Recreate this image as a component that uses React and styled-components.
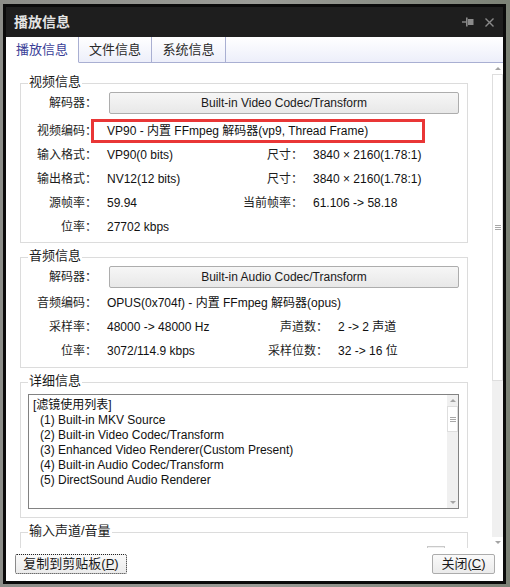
import React from 'react';
import styled, { createGlobalStyle } from 'styled-components';

const FONT = '"Liberation Sans", "Noto Sans CJK SC", sans-serif';

const videoRows = [
  { label: '视频编码：', value: 'VP90 - 内置 FFmpeg 解码器(vp9, Thread Frame)', marked: true },
  { label: '输入格式：', value: 'VP90(0 bits)', label2: '尺寸：', value2: '3840 × 2160(1.78:1)' },
  { label: '输出格式：', value: 'NV12(12 bits)', label2: '尺寸：', value2: '3840 × 2160(1.78:1)' },
  { label: '源帧率：', value: '59.94', label2: '当前帧率：', value2: '61.106 -> 58.18' },
  { label: '位率：', value: '27702 kbps' },
];

const audioRows = [
  { label: '音频编码：', value: 'OPUS(0x704f) - 内置 FFmpeg 解码器(opus)' },
  { label: '采样率：', value: '48000 -> 48000 Hz', label2: '声道数：', value2: '2 -> 2 声道' },
  { label: '位率：', value: '3072/114.9 kbps', label2: '采样位数：', value2: '32 -> 16 位' },
];

const filters = [
  '(1) Built-in MKV Source',
  '(2) Built-in Video Codec/Transform',
  '(3) Enhanced Video Renderer(Custom Present)',
  '(4) Built-in Audio Codec/Transform',
  '(5) DirectSound Audio Renderer',
];

const InfoRows = ({ rows, cols, top }) => (
  <Rows $top={top}>
    {rows.map((r, i) => (
      <InfoRow key={i} $cols={cols}>
        <Label>{r.label}</Label>
        <Value $wide={!r.label2}>{r.value}</Value>
        {r.label2 && <Label>{r.label2}</Label>}
        {r.label2 && <Value>{r.value2}</Value>}
        {r.marked && <RedMark />}
      </InfoRow>
    ))}
  </Rows>
);

const ScrollBar = ({ thumb, small }) => (
  <Bar $small={small}>
    <ArrowCell>
      <Arrow />
    </ArrowCell>
    <Thumb $h={thumb}>
      <Grip />
    </Thumb>
    <Track />
    <ArrowCell>
      <Arrow $down />
    </ArrowCell>
  </Bar>
);

const App = () => {
  return (
    <>
      <GlobalStyle />
      <Window>
        <TitleBar>
          <TitleText>播放信息</TitleText>
          <TitleIcons>
            <svg width="12" height="10" viewBox="0 0 12 10">
              <path d="M0 5h5" stroke="#8a8a8a" strokeWidth="1.4" />
              <rect x="4" y="0.5" width="1.6" height="9" fill="#8a8a8a" />
              <rect x="6" y="2" width="5.5" height="6" fill="#8a8a8a" />
            </svg>
            <svg width="9" height="9" viewBox="0 0 9 9">
              <path d="M0.5 0.5l8 8M8.5 0.5l-8 8" stroke="#8a8a8a" strokeWidth="1.4" />
            </svg>
          </TitleIcons>
        </TitleBar>

        <TabStrip>
          <Tab $w={73} $active>播放信息</Tab>
          <Tab $w={73}>文件信息</Tab>
          <Tab $w={74}>系统信息</Tab>
          <TabFill />
        </TabStrip>

        <Body>
          <Scroll>
            <Group $pad="8px 8px 3px 0">
              <Legend>视频信息</Legend>
              <DecoderRow>
                <Label $w={76}>解码器：</Label>
                <CodecButton>Built-in Video Codec/Transform</CodecButton>
              </DecoderRow>
              <InfoRows rows={videoRows} cols="76px 146px 60px 1fr" top={5} />
            </Group>

            <Group $pad="8px 8px 4px 0">
              <Legend>音频信息</Legend>
              <DecoderRow>
                <Label $w={76}>解码器：</Label>
                <CodecButton>Built-in Audio Codec/Transform</CodecButton>
              </DecoderRow>
              <InfoRows rows={audioRows} cols="76px 171px 60px 1fr" top={3} />
            </Group>

            <Group $pad="11px 8px 8px 7px">
              <Legend>详细信息</Legend>
              <ListBox>
                <ListText>
                  <ListLine>[滤镜使用列表]</ListLine>
                  {filters.map((f) => (
                    <ListLine key={f} $indent>
                      {f}
                    </ListLine>
                  ))}
                </ListText>
                <ScrollBar thumb={26} small />
              </ListBox>
            </Group>

            <Group $pad="13px 22px 0 0" $h={60}>
              <Legend>输入声道/音量</Legend>
              <SliderThumb />
            </Group>
          </Scroll>
          <ScrollBar thumb={307} />
        </Body>

        <Footer>
          <FooterButton $w={112} $focused>
            复制到剪贴板(<u>P</u>)
          </FooterButton>
          <FooterButton $w={63}>
            关闭(<u>C</u>)
          </FooterButton>
        </Footer>
      </Window>
    </>
  );
};

export default App;

const GlobalStyle = createGlobalStyle`
  html, body {
    margin: 0;
    padding: 0;
  }
  body {
    width: 510px;
    height: 587px;
    overflow: hidden;
    background: linear-gradient(90deg, #8c8d88, #9b9c97 50%, #7c8276);
    font-family: ${FONT};
  }
`;

const Window = styled.div`
  box-sizing: border-box;
  margin: 4px 0 0 3px;
  width: 503px;
  height: 580px;
  border: 3px solid #0b0b0b;
  background: #fff;
  display: flex;
  flex-direction: column;
  overflow: hidden;
`;

const TitleBar = styled.div`
  flex-shrink: 0;
  height: 30px;
  box-sizing: border-box;
  display: flex;
  align-items: center;
  padding: 0 9px 0 8px;
  background: #1e1e1e;
  color: #e4e4e4;
  font-size: 14px;
  font-weight: bold;
`;

const TitleText = styled.div`
  flex: 1;
  line-height: 18px;
`;

const TitleIcons = styled.div`
  display: flex;
  align-items: center;
  gap: 11px;
`;

const TabStrip = styled.div`
  flex-shrink: 0;
  display: flex;
  height: 26px;
  background: linear-gradient(#ffffff, #eceefa);
`;

const Tab = styled.div`
  box-sizing: border-box;
  width: ${(p) => p.$w}px;
  display: flex;
  align-items: center;
  justify-content: center;
  font-size: 13px;
  line-height: 16px;
  padding-top: 1px;
  border-right: 1px solid #a9afd2;
  border-bottom: 1px solid ${(p) => (p.$active ? 'transparent' : '#a9afd2')};
  background: ${(p) => (p.$active ? '#fff' : 'transparent')};
  color: ${(p) => (p.$active ? '#3b3f98' : '#2a2a2a')};
`;

const TabFill = styled.div`
  flex: 1;
  border-bottom: 1px solid #a9afd2;
`;

const Body = styled.div`
  flex-shrink: 0;
  display: flex;
  height: 485px;
`;

const Scroll = styled.div`
  flex: 1;
  overflow: hidden;
  display: flex;
  flex-direction: column;
  gap: 14px;
  padding: 20px 0 0 14px;
`;

const Group = styled.div`
  position: relative;
  flex-shrink: 0;
  box-sizing: border-box;
  width: 448px;
  ${(p) => p.$h && `height: ${p.$h}px;`}
  border: 1px solid #dcdcdc;
  padding: ${(p) => p.$pad};
`;

const Legend = styled.span`
  position: absolute;
  top: -10px;
  left: 7px;
  padding: 0 1px;
  background: #fff;
  font-size: 13px;
  line-height: 16px;
  color: #1b1b1b;
`;

const DecoderRow = styled.div`
  display: flex;
  align-items: center;
  height: 22px;
`;

const Label = styled.div`
  ${(p) => p.$w && `width: ${p.$w}px; flex-shrink: 0;`}
  text-align: right;
  white-space: nowrap;
  font-size: 12px;
  line-height: 16px;
  color: #1e1e1e;
`;

const CodecButton = styled.div`
  flex: 1;
  height: 22px;
  box-sizing: border-box;
  margin-left: 12px;
  display: flex;
  align-items: center;
  justify-content: center;
  border: 1px solid #adadad;
  border-radius: 2px;
  background: linear-gradient(#f6f6f6, #e8e8e8);
  font-size: 12px;
  line-height: 16px;
  color: #1a1a1a;
`;

const Rows = styled.div`
  margin-top: ${(p) => p.$top}px;
`;

const InfoRow = styled.div`
  position: relative;
  display: grid;
  grid-template-columns: ${(p) => p.$cols};
  align-items: center;
  height: 24px;
`;

const Value = styled.div`
  padding-left: 10px;
  white-space: nowrap;
  font-size: 12px;
  line-height: 16px;
  color: #111;
  ${(p) => p.$wide && 'grid-column: 2 / 5;'}
`;

const RedMark = styled.div`
  position: absolute;
  left: 70px;
  top: 0;
  width: 334px;
  height: 24px;
  box-sizing: border-box;
  border: 3px solid #e93636;
`;

const ListBox = styled.div`
  display: flex;
  height: 115px;
  box-sizing: border-box;
  border: 1px solid #828282;
`;

const ListText = styled.div`
  flex: 1;
  padding: 3px 4px;
`;

const ListLine = styled.div`
  padding-left: ${(p) => (p.$indent ? 7 : 0)}px;
  font-size: 12px;
  line-height: 15px;
  white-space: nowrap;
  color: #111;
`;

const Bar = styled.div`
  flex-shrink: 0;
  width: 11px;
  display: flex;
  flex-direction: column;
  background: ${(p) => (p.$small ? '#f0f0f0' : '#fff')};
`;

const ArrowCell = styled.div`
  height: 11px;
  display: flex;
  align-items: center;
  justify-content: center;
`;

const Arrow = styled.span`
  width: 0;
  height: 0;
  border-left: 3px solid transparent;
  border-right: 3px solid transparent;
  ${(p) => (p.$down ? 'border-top' : 'border-bottom')}: 3px solid #a4a4a4;
`;

const Thumb = styled.div`
  height: ${(p) => p.$h}px;
  box-sizing: border-box;
  border: 1px solid #dedede;
  background: #fff;
  display: flex;
  align-items: center;
  justify-content: center;
`;

const Grip = styled.span`
  width: 6px;
  height: 5px;
  box-sizing: border-box;
  border-top: 1px solid #a8a8a8;
  border-bottom: 1px solid #a8a8a8;
  background: linear-gradient(#a8a8a8, #a8a8a8) center / 100% 1px no-repeat;
`;

const Track = styled.div`
  flex: 1;
  background: #f0f0f0;
`;

const SliderThumb = styled.div`
  margin-left: auto;
  width: 18px;
  height: 12px;
  box-sizing: border-box;
  border: 1px solid #c9c9c9;
  border-bottom: none;
  background: #f0f0f0;
`;

const Footer = styled.div`
  flex: 1;
  display: flex;
  justify-content: space-between;
  align-items: flex-start;
  padding: 6px 8px 0 9px;
`;

const FooterButton = styled.button`
  box-sizing: border-box;
  width: ${(p) => p.$w}px;
  height: 20px;
  padding: 0;
  border: 1px ${(p) => (p.$focused ? 'dotted #222' : 'solid #acacac')};
  border-radius: 2px;
  background: linear-gradient(#fafafa, #ebebeb);
  font-family: ${FONT};
  font-size: 13px;
  line-height: 16px;
  color: #1a1a1a;
`;
